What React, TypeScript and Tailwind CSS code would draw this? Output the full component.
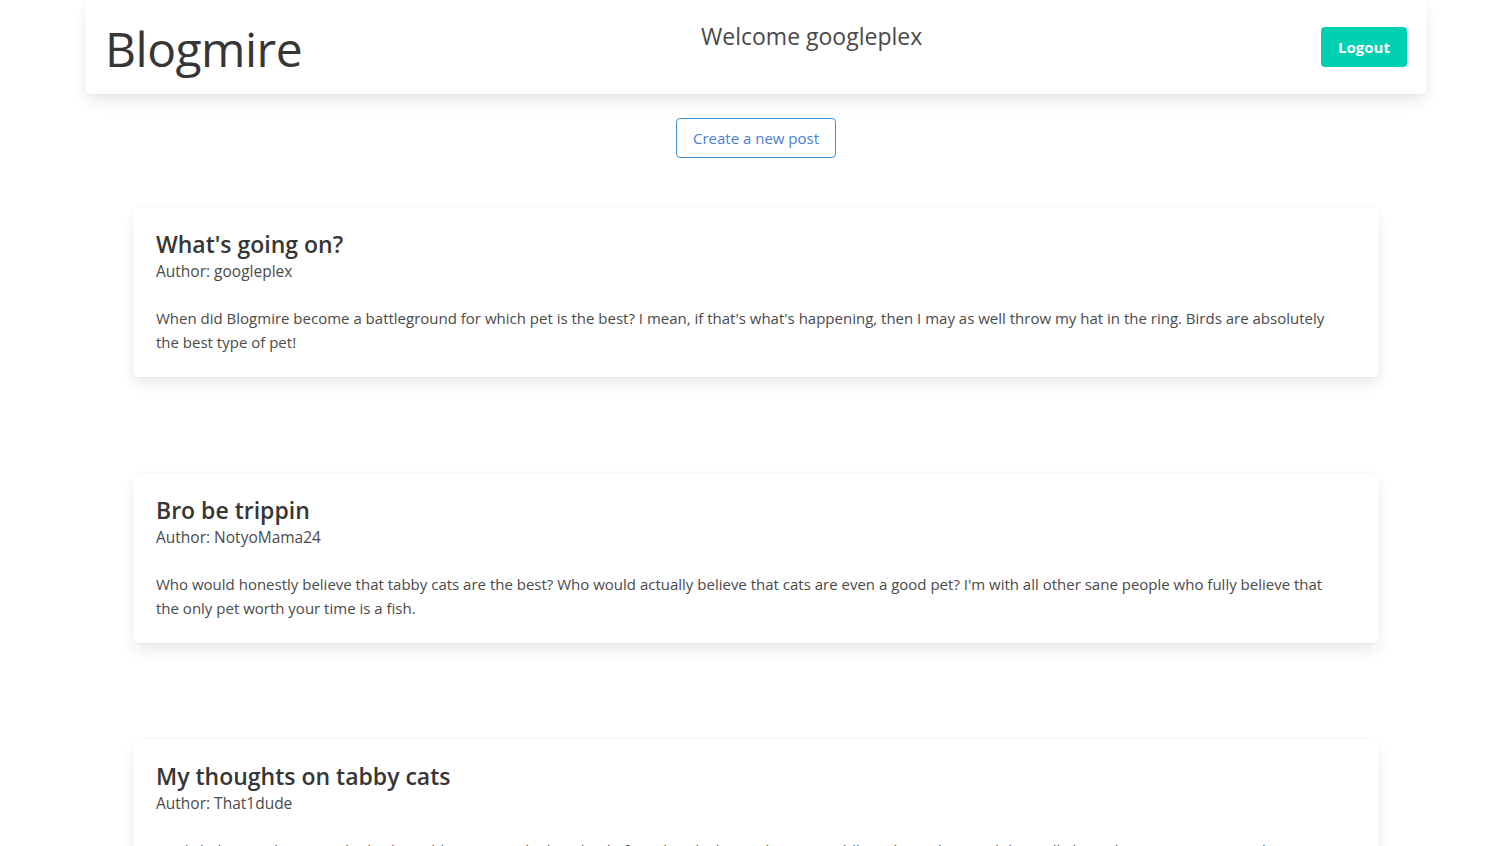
import React from 'react';

const posts = [
  {
    title: "What's going on?",
    author: 'googleplex',
    body: "When did Blogmire become a battleground for which pet is the best? I mean, if that's what's happening, then I may as well throw my hat in the ring. Birds are absolutely the best type of pet!"
  },
  {
    title: 'Bro be trippin',
    author: 'NotyoMama24',
    body: "Who would honestly believe that tabby cats are the best? Who would actually believe that cats are even a good pet? I'm with all other sane people who fully believe that the only pet worth your time is a fish."
  },
  {
    title: 'My thoughts on tabby cats',
    author: 'That1dude',
    body: "I truly believe without any doubt that tabby cats are the best kind of pet, hands down. They are cuddly, independent, and they will always keep you company when you need them the most. Nothing else even comes close."
  }
];

const App: React.FC = () => {
  return (
    <div className="min-h-screen bg-white pl-[8px] text-[#4a4a4a]" style={{ fontFamily: '"Open Sans", "Noto Sans", sans-serif' }}>
      {/* Header */}
      <header className="mx-[77px] h-[94px] rounded-b-md bg-white shadow-[0_8px_16px_-2px_rgba(10,10,10,0.1),0_0_0_1px_rgba(10,10,10,0.02)] flex items-start justify-between px-[20px]">
        <h1 className="mt-[19px] text-[48px] leading-[60px] font-normal text-[#363636] tracking-[-0.5px]">Blogmire</h1>
        <p className="mt-[20px] text-[23px] leading-[32px] text-[#4a4a4a]">Welcome googleplex</p>
        <button className="mt-[27px] h-[40px] rounded-[4px] bg-[#00d1b2] px-[17px] text-[15px] font-bold text-white">
          Logout
        </button>
      </header>

      {/* Create button */}
      <div className="mt-[24px] flex justify-center">
        <button className="h-[40px] rounded-[4px] border border-[#3e8ed0] bg-white px-[16px] text-[15px] text-[#4a7fd0]">
          Create a new post
        </button>
      </div>

      {/* Posts */}
      <div className="mt-[49px] mx-[125px] flex flex-col gap-[96px]">
        {posts.map((post, i) => (
          <div
            key={i}
            className="rounded-md bg-white p-[23px] shadow-[0_8px_16px_-2px_rgba(10,10,10,0.1),0_0_0_1px_rgba(10,10,10,0.02)]"
          >
            <h2 className="text-[23px] leading-[28px] font-semibold text-[#363636]">{post.title}</h2>
            <p className="mt-[2px] text-[15.5px] leading-[22px] text-[#4a4a4a]">Author: {post.author}</p>
            <p className="mt-[24px] pr-[13px] text-[15px] leading-[24px] text-[#4a4a4a]">{post.body}</p>
          </div>
        ))}
      </div>
    </div>
  );
};

export default App;
